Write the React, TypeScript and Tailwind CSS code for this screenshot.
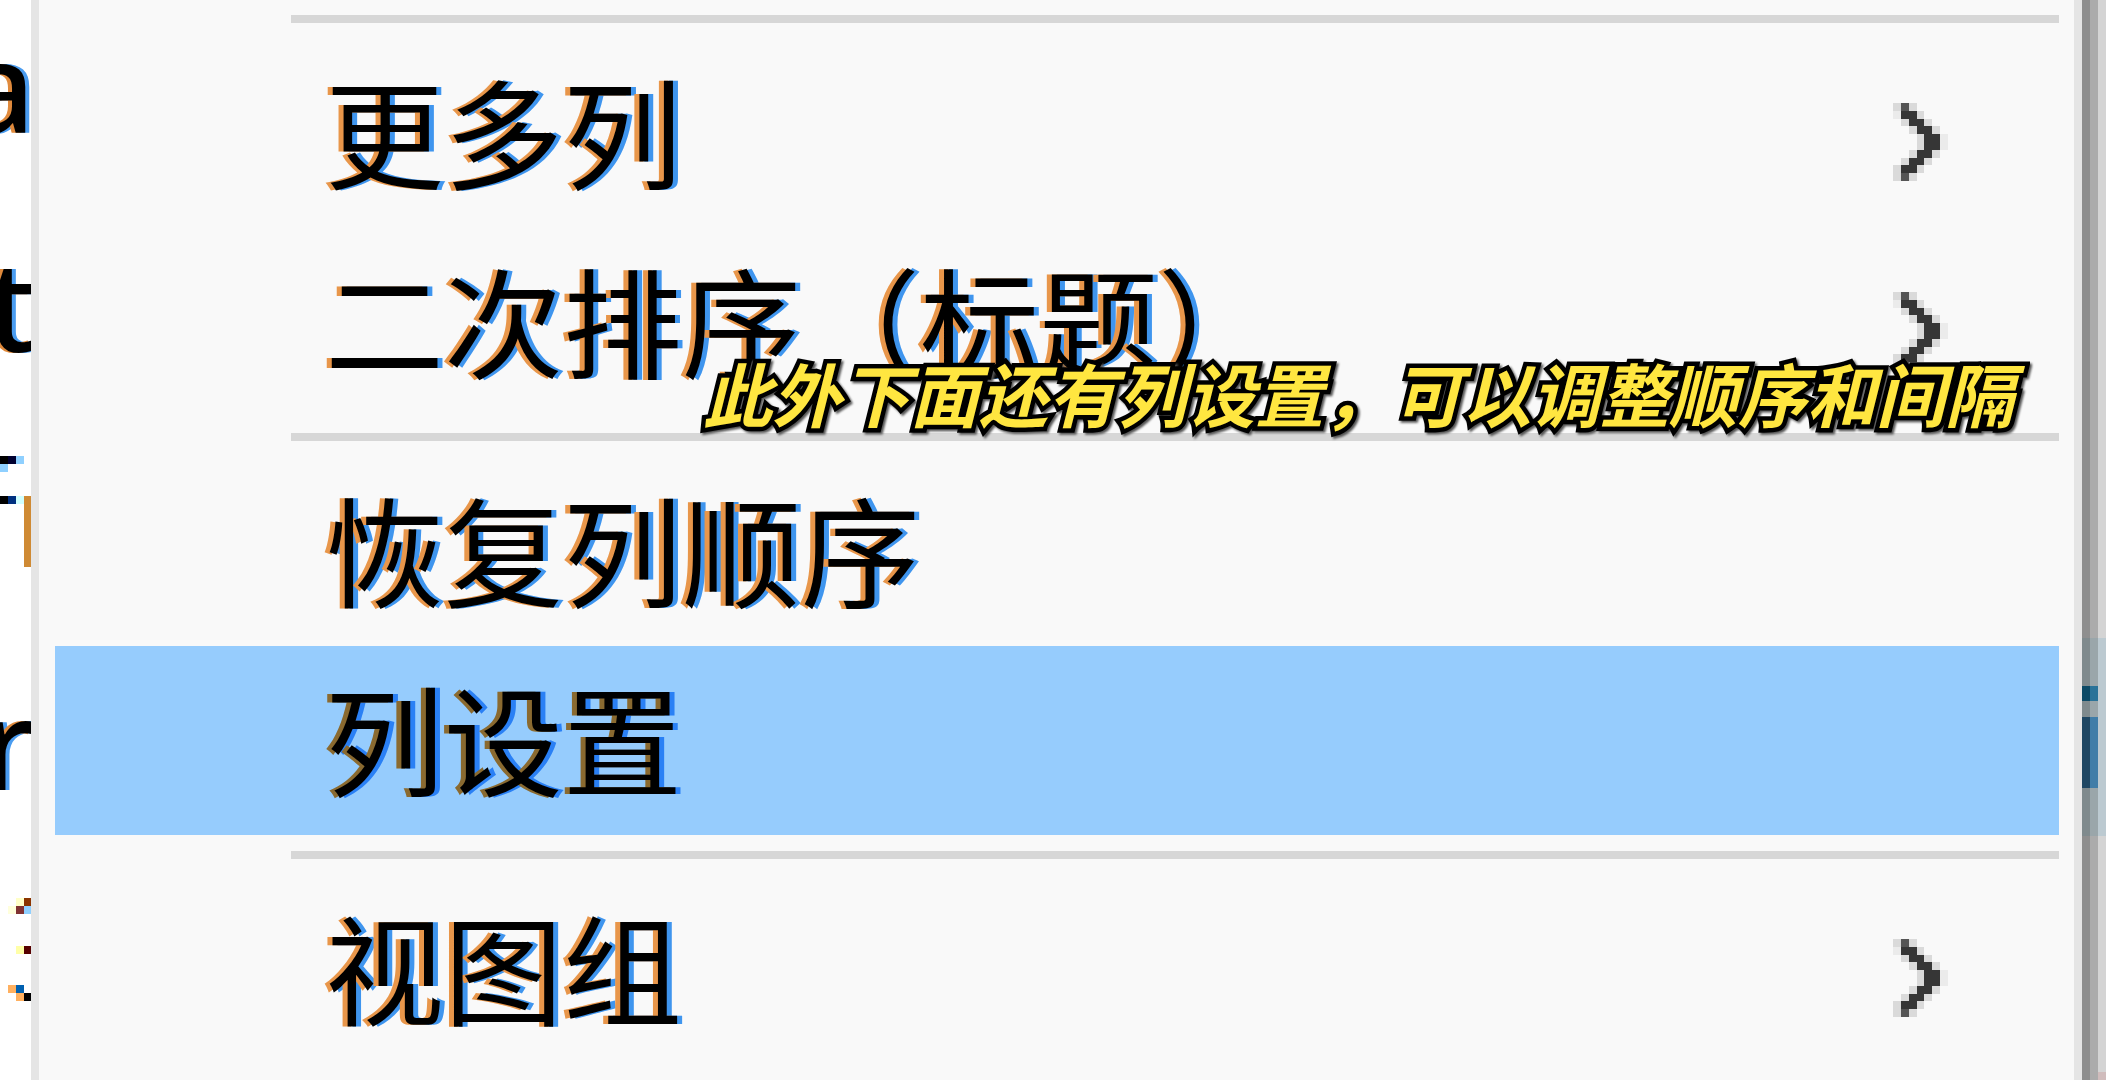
interface MenuEntry {
  label: string;
  submenu?: boolean;
  active?: boolean;
}

interface Pixel {
  x: number;
  y: number;
  w?: number;
  h?: number;
  fill: string;
}

const GROUPS: MenuEntry[][] = [
  [
    { label: "更多列", submenu: true },
    { label: "二次排序（标题）", submenu: true },
  ],
  [{ label: "恢复列顺序" }, { label: "列设置", active: true }],
  [{ label: "视图组", submenu: true }],
];

// one letter per pixel of the submenu arrow
const ARROW = [
  "lml....",
  "eddl...",
  ".lddl..",
  "..lddl.",
  "...ldde",
  "...ldde",
  "..lddl.",
  ".lddl..",
  "lddl...",
  "lml....",
];

const ARROW_COLORS: Record<string, string> = {
  d: "#363636",
  m: "#555555",
  l: "#dadada",
  e: "#ebebeb",
};

const THIRD_ROW: Pixel[] = [
  { x: 0, y: 18, fill: "#000000" },
  { x: 8, y: 18, fill: "#000030" },
  { x: 16, y: 18, fill: "#8fd0ff" },
  { x: 0, y: 26, fill: "#8fd0ff" },
  { x: 0, y: 58, fill: "#000000" },
  { x: 8, y: 58, fill: "#003080" },
  { x: 16, y: 58, fill: "#d0ffff" },
  { x: 24, y: 58, h: 71, fill: "#cf8a34" },
];

const FIFTH_ROW: Pixel[] = [
  { x: 16, y: 22, fill: "#ffffc8" },
  { x: 24, y: 22, fill: "#8a3400" },
  { x: 8, y: 30, fill: "#ffffdc" },
  { x: 16, y: 30, fill: "#803232" },
  { x: 24, y: 30, fill: "#8fd0ff" },
  { x: 16, y: 70, fill: "#ffffa8" },
  { x: 24, y: 70, fill: "#560000" },
  { x: 8, y: 109, fill: "#ffb060" },
  { x: 16, y: 109, fill: "#0060b0" },
  { x: 16, y: 117, fill: "#ffb060" },
  { x: 24, y: 117, fill: "#000000" },
];

function SubmenuArrow() {
  return (
    <svg
      viewBox="0 0 7 10"
      shapeRendering="crispEdges"
      aria-hidden="true"
      className="w-[55px] h-[78px] mt-6 shrink-0"
    >
      {ARROW.map((line, y) =>
        line
          .split("")
          .map((c, x) =>
            c === "." ? null : (
              <rect key={`${x}-${y}`} x={x} y={y} width="1" height="1" fill={ARROW_COLORS[c]} />
            )
          )
      )}
    </svg>
  );
}

function Pixels({ items }: { items: Pixel[] }) {
  return (
    <svg viewBox="0 0 31 219" shapeRendering="crispEdges" aria-hidden="true" className="w-full h-[219px]">
      {items.map((p, i) => (
        <rect key={i} x={p.x} y={p.y} width={p.w ?? 8} height={p.h ?? 8} fill={p.fill} />
      ))}
    </svg>
  );
}

function Letter({ children }: { children: string }) {
  return (
    <div className="h-[219px] -mr-1 flex justify-end leading-[168px] text-[126px] font-medium [text-shadow:-4px_0_#e08a3c,4px_0_#4a9cf0]">
      {children}
    </div>
  );
}

function Separator() {
  return <div role="separator" className="h-2 my-4 ml-[236px] bg-[#d7d7d7]" />;
}

function MenuItem({ label, submenu, active }: MenuEntry) {
  return (
    <button
      type="button"
      role="menuitem"
      className={`flex w-full h-[189px] items-center justify-between pb-2 pl-[270px] pr-[111px] text-left text-black ${
        active
          ? "bg-[#96ccfd] [text-shadow:-5px_0_#8a6a30,5px_0_#2a80f5]"
          : "[text-shadow:-5px_0_#e8964a,5px_0_#3f95ee]"
      }`}
    >
      <span className="text-[119px] leading-none whitespace-nowrap">{label}</span>
      {submenu && <SubmenuArrow />}
    </button>
  );
}

export default function App() {
  return (
    <div className="relative flex h-screen overflow-hidden bg-white text-black font-['Noto_Sans','Noto_Sans_CJK_SC',sans-serif]">
      <aside className="w-[31px] shrink-0 overflow-hidden">
        <Letter>a</Letter>
        <Letter>t</Letter>
        <Pixels items={THIRD_ROW} />
        <Letter>r</Letter>
        <Pixels items={FIFTH_ROW} />
      </aside>

      <div
        role="menu"
        className="-mt-px flex-1 min-w-0 pl-4 pr-[15px] border-x-8 border-[#e5e5e5] bg-[#f9f9f9] font-['Noto_Sans_CJK_SC',sans-serif]"
      >
        {GROUPS.map((group, i) => (
          <div key={i} role="group" className="flow-root">
            <Separator />
            {group.map((item) => (
              <MenuItem key={item.label} {...item} />
            ))}
          </div>
        ))}
      </div>

      {/* window edge behind the menu */}
      <div className="w-6 shrink-0 flex">
        <div className="w-2 flex flex-col bg-[#8e8e8e]">
          <div className="h-[198px] mt-[638px] py-12 bg-[#7f8a8d] flex flex-col gap-4">
            <div className="h-4 bg-[#0c4a66]" />
            <div className="h-[71px] shrink-0 bg-[#1f4763]" />
          </div>
        </div>
        <div className="w-2 flex flex-col bg-[#ababab]">
          <div className="h-[198px] mt-[638px] py-12 bg-[#9aa6aa] flex flex-col gap-4">
            <div className="h-4 bg-[#2a7399]" />
            <div className="h-[71px] shrink-0 bg-[#407da8]" />
          </div>
        </div>
        <div className="w-2 flex flex-col bg-[#d4d4d4]">
          <div className="h-[198px] mt-[638px] bg-[#bccad1]" />
          <div className="h-2 mt-auto bg-[#d0bcbc]" />
        </div>
      </div>

      <p className="absolute top-[357px] right-[92px] text-[69px] leading-[70px] font-bold italic whitespace-nowrap text-[#ffe640] font-['Noto_Sans_CJK_SC',sans-serif] [-webkit-text-stroke:9px_black] [paint-order:stroke] drop-shadow-[2px_2px_1px_#555]">
        此外下面还有列设置，可以调整顺序和间隔
      </p>
    </div>
  );
}
